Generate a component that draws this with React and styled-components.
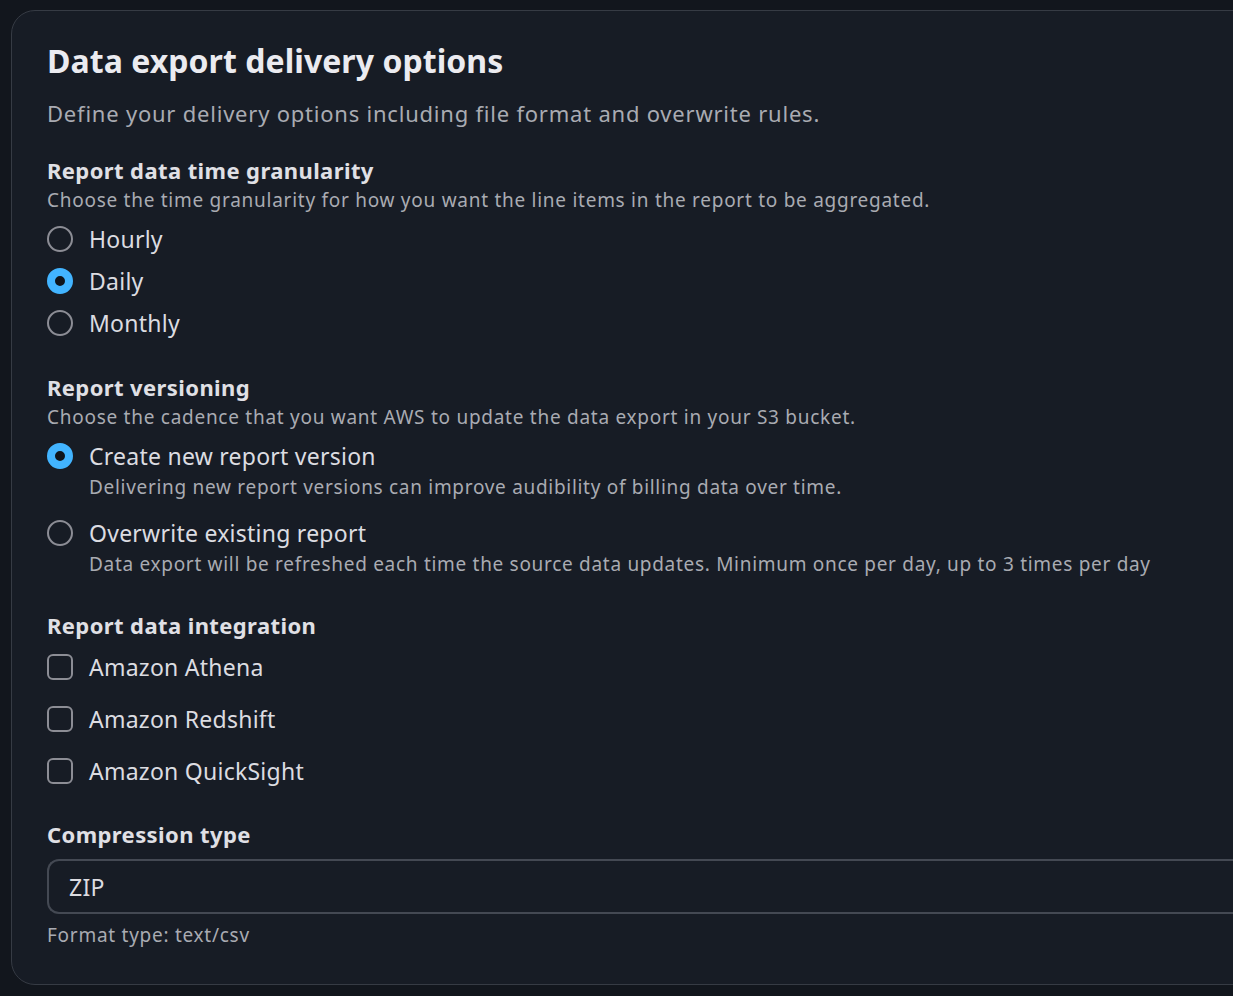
import styled, { createGlobalStyle } from 'styled-components';

const GlobalStyle = createGlobalStyle`
  html, body {
    margin: 0;
    padding: 0;
    background: #12161d;
    overflow: hidden;
  }
  body {
    font-family: 'Noto Sans', 'Open Sans', sans-serif;
    color: #dedee3;
  }
`;

const Page = styled.div`
  padding: 10px 0 0 11px;
  height: 996px;
  box-sizing: border-box;
`;

const Card = styled.section`
  width: 1300px;
  box-sizing: border-box;
  background: #171c25;
  border: 1px solid #363b44;
  border-radius: 24px;
  padding: 30px 0 35px 35px;
`;

const Title = styled.h1`
  margin: 0;
  font-size: 32px;
  line-height: 40px;
  font-weight: 700;
  color: #ebebf0;
  letter-spacing: 0.05px;
`;

const Subtitle = styled.p`
  margin: 17px 0 0;
  font-size: 22px;
  line-height: 30px;
  letter-spacing: 0.78px;
  color: #a9abb2;
`;

const Section = styled.div`
  margin-top: ${(p) => p.$gap}px;
`;

const Label = styled.div`
  font-size: 22px;
  line-height: 30px;
  font-weight: 700;
  letter-spacing: 0.4px;
  color: #e0e0e5;
`;

const Description = styled.div`
  margin-top: 2px;
  font-size: 19px;
  line-height: 27px;
  letter-spacing: 0.73px;
  color: #a9abb2;
`;

const Options = styled.div`
  display: flex;
  flex-direction: column;
  gap: ${(p) => p.$gap}px;
  margin-top: ${(p) => p.$top}px;
`;

const Option = styled.div`
  display: grid;
  grid-template-columns: 26px 1fr;
  column-gap: 16px;
  align-items: center;
`;

const Radio = styled.span`
  width: 26px;
  height: 26px;
  box-sizing: border-box;
  border-radius: 50%;
  border: ${(p) => (p.$checked ? '8px solid #42b4ff' : '2px solid #8c8d95')};
  background: ${(p) => (p.$checked ? '#0f141a' : 'transparent')};
`;

const Checkbox = styled.span`
  width: 26px;
  height: 26px;
  box-sizing: border-box;
  border-radius: 6px;
  border: 2px solid #8c8d95;
`;

const OptionLabel = styled.span`
  font-size: 23px;
  line-height: 30px;
  letter-spacing: 0.25px;
  color: #dcdce1;
`;

const OptionHint = styled.span`
  grid-column: 2;
  margin-top: 3px;
  font-size: 19px;
  line-height: 27px;
  letter-spacing: 0.7px;
  color: #a9abb2;
`;

const Field = styled.div`
  margin-top: 10px;
  height: 55px;
  box-sizing: border-box;
  border: 2px solid #444953;
  border-right: none;
  border-radius: 12px 0 0 12px;
  display: flex;
  align-items: center;
  padding-left: 20px;
  font-size: 23px;
  letter-spacing: 0.25px;
  color: #dcdce1;
`;

const Hint = styled.div`
  margin-top: 8px;
  font-size: 19px;
  line-height: 27px;
  letter-spacing: 0.73px;
  color: #a9abb2;
`;

function RadioOption({ label, hint, checked }) {
  return (
    <Option>
      <Radio $checked={checked} />
      <OptionLabel>{label}</OptionLabel>
      {hint && <OptionHint>{hint}</OptionHint>}
    </Option>
  );
}

function CheckOption({ label }) {
  return (
    <Option>
      <Checkbox />
      <OptionLabel>{label}</OptionLabel>
    </Option>
  );
}

export default function App() {
  return (
    <Page>
      <GlobalStyle />
      <Card>
        <Title>Data export delivery options</Title>
        <Subtitle>Define your delivery options including file format and overwrite rules.</Subtitle>

        <Section $gap={27}>
          <Label>Report data time granularity</Label>
          <Description>
            Choose the time granularity for how you want the line items in the report to be aggregated.
          </Description>
          <Options $gap={12} $top={10}>
            <RadioOption label="Hourly" />
            <RadioOption label="Daily" checked />
            <RadioOption label="Monthly" />
          </Options>
        </Section>

        <Section $gap={34}>
          <Label>Report versioning</Label>
          <Description>
            Choose the cadence that you want AWS to update the data export in your S3 bucket.
          </Description>
          <Options $gap={17} $top={10}>
            <RadioOption
              label="Create new report version"
              hint="Delivering new report versions can improve audibility of billing data over time."
              checked
            />
            <RadioOption
              label="Overwrite existing report"
              hint="Data export will be refreshed each time the source data updates. Minimum once per day, up to 3 times per day"
            />
          </Options>
        </Section>

        <Section $gap={32}>
          <Label>Report data integration</Label>
          <Options $gap={22} $top={12}>
            <CheckOption label="Amazon Athena" />
            <CheckOption label="Amazon Redshift" />
            <CheckOption label="Amazon QuickSight" />
          </Options>
        </Section>

        <Section $gap={33}>
          <Label>Compression type</Label>
          <Field>ZIP</Field>
          <Hint>Format type: text/csv</Hint>
        </Section>
      </Card>
    </Page>
  );
}
